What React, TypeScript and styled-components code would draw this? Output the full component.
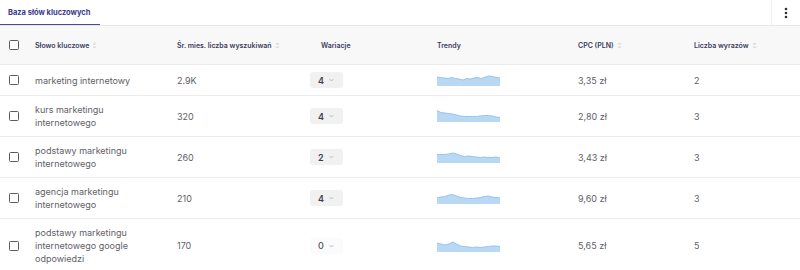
import styled, { createGlobalStyle } from "styled-components";

const GlobalStyle = createGlobalStyle`
  * {
    box-sizing: border-box;
  }

  body {
    margin: 0;
    background: #ffffff;
    font-family: "Inter", "Noto Sans", sans-serif;
  }
`;

type Keyword = {
  phrase: string;
  volume: string;
  variations: number;
  trend: number[];
  cpc: string;
  words: number;
};

const keywords: Keyword[] = [
  {
    phrase: "marketing internetowy",
    volume: "2.9K",
    variations: 4,
    trend: [3, 3.5, 4, 4.5, 3.5, 4.5, 5, 6, 4.5, 5, 4, 3.5, 4.5, 3, 2, 2.5, 3.5, 4],
    cpc: "3,35 zł",
    words: 2,
  },
  {
    phrase: "kurs marketingu internetowego",
    volume: "320",
    variations: 4,
    trend: [0.5, 2.5, 3, 3.5, 4, 5, 6, 6.5, 6.5, 6.5, 6.5, 6, 5.5, 5.5, 6, 7, 7.5],
    cpc: "2,80 zł",
    words: 3,
  },
  {
    phrase: "podstawy marketingu internetowego",
    volume: "260",
    variations: 2,
    trend: [3.5, 3.5, 3.5, 3, 2, 3, 4.5, 5.5, 5, 5.5, 6, 6.5, 6, 6.5, 6.5, 6, 7],
    cpc: "3,43 zł",
    words: 3,
  },
  {
    phrase: "agencja marketingu internetowego",
    volume: "210",
    variations: 4,
    trend: [6, 5, 4.5, 3, 2.5, 4, 5.5, 6, 6.5, 6.5, 6, 5.5, 4.5, 4, 5, 5.5, 6],
    cpc: "9,60 zł",
    words: 3,
  },
  {
    phrase: "podstawy marketingu internetowego google odpowiedzi",
    volume: "170",
    variations: 0,
    trend: [3, 4, 5, 4, 2, 4, 6, 6.5, 7, 7.5, 7, 7.5, 7, 6.5, 6, 6, 6.5],
    cpc: "5,65 zł",
    words: 5,
  },
];

const COLUMNS = "35px 142px 133px 127px 141px 116px 1fr";

function SortIcon() {
  return (
    <svg width="5" height="7" viewBox="0 0 5 7">
      <path d="M2.5 0.5 L4.5 2.5 H0.5 Z" fill="#d6d6dc" />
      <path d="M2.5 6.5 L4.5 4.5 H0.5 Z" fill="#d6d6dc" />
    </svg>
  );
}

function Sparkline({ values }: { values: number[] }) {
  const w = 63;
  const h = 12;
  const step = w / (values.length - 1);
  const line = values.map((v, i) => `${(i * step).toFixed(2)},${v}`).join(" L");
  return (
    <svg width={w} height={h} viewBox={`0 0 ${w} ${h}`}>
      <path d={`M0,${h} L${line} L${w},${h} Z`} fill="#b9d8f4" />
      <path d={`M${line}`} fill="none" stroke="#8fc0ec" strokeWidth="0.9" />
    </svg>
  );
}

function App() {
  return (
    <>
      <GlobalStyle />
      <Page>
        <TabBar>
          <Tab>Baza słów kluczowych</Tab>
          <MenuButton>
            <svg width="4" height="12" viewBox="0 0 4 12">
              <circle cx="2" cy="2" r="1.3" fill="#333" />
              <circle cx="2" cy="6" r="1.3" fill="#333" />
              <circle cx="2" cy="10" r="1.3" fill="#333" />
            </svg>
          </MenuButton>
        </TabBar>

        <HeaderRow>
          <CheckCell>
            <Checkbox />
          </CheckCell>
          <HeadCell>
            Słowo kluczowe <SortIcon />
          </HeadCell>
          <HeadCell>
            Śr. mies. liczba wyszukiwań <SortIcon />
          </HeadCell>
          <HeadCell $indent={11}>Wariacje</HeadCell>
          <HeadCell>Trendy</HeadCell>
          <HeadCell>
            CPC (PLN) <SortIcon />
          </HeadCell>
          <HeadCell>
            Liczba wyrazów <SortIcon />
          </HeadCell>
        </HeaderRow>

        {keywords.map((k) => (
          <Row key={k.phrase}>
            <CheckCell>
              <Checkbox />
            </CheckCell>
            <Cell>{k.phrase}</Cell>
            <Cell>{k.volume}</Cell>
            <Cell>
              <VariationPill $empty={k.variations === 0}>
                {k.variations}
                <svg width="5" height="4" viewBox="0 0 5 4">
                  <path d="M0.6 1 L2.5 3 L4.4 1" fill="none" stroke="#b0b0b8" strokeWidth="0.8" />
                </svg>
              </VariationPill>
            </Cell>
            <Cell>
              <Sparkline values={k.trend} />
            </Cell>
            <Cell>{k.cpc}</Cell>
            <Cell>{k.words}</Cell>
          </Row>
        ))}
      </Page>
    </>
  );
}

const Page = styled.div`
  width: 800px;
  height: 270px;
  overflow: hidden;
  background: #ffffff;
`;

const TabBar = styled.div`
  display: flex;
  height: 26px;
  border-bottom: 1px solid #e7e7ea;
`;

const Tab = styled.div`
  display: flex;
  align-items: center;
  width: 100px;
  padding: 0 8px;
  font-size: 7.5px;
  font-weight: 700;
  color: #3b3a8c;
  border-bottom: 1.5px solid #4a4998;
  white-space: nowrap;
`;

const MenuButton = styled.div`
  margin-left: auto;
  width: 29px;
  display: flex;
  align-items: center;
  justify-content: center;
  border-left: 1px solid #efeff1;
`;

const HeaderRow = styled.div`
  display: grid;
  grid-template-columns: ${COLUMNS};
  align-items: center;
  height: 39px;
  background: #f8f8f9;
  border-bottom: 1px solid #ececee;
`;

const Row = styled.div`
  display: grid;
  grid-template-columns: ${COLUMNS};
  align-items: center;
  padding: 7px 0;
  min-height: 31px;
  border-bottom: 1px solid #ececee;
`;

const CheckCell = styled.div`
  display: flex;
  padding-left: 9px;
`;

const Checkbox = styled.span`
  width: 10px;
  height: 10px;
  border: 1.3px solid #5a5a60;
  border-radius: 1.5px;
  background: #ffffff;
`;

const HeadCell = styled.div<{ $indent?: number }>`
  display: flex;
  align-items: center;
  gap: 3px;
  padding-left: ${(p) => p.$indent ?? 0}px;
  font-size: 7px;
  font-weight: 600;
  color: #3d3c60;
  white-space: nowrap;
`;

const Cell = styled.div`
  display: flex;
  align-items: center;
  padding-right: 20px;
  font-size: 9px;
  line-height: 13px;
  color: #616167;
`;

const VariationPill = styled.span<{ $empty: boolean }>`
  display: inline-flex;
  align-items: center;
  gap: 5px;
  width: 33px;
  height: 16px;
  padding-left: 8px;
  border-radius: 3px;
  background: ${(p) => (p.$empty ? "#fbfbfb" : "#f1f1f2")};
  font-size: 9px;
  font-weight: ${(p) => (p.$empty ? 500 : 600)};
  color: ${(p) => (p.$empty ? "#55555c" : "#3f3f46")};
`;

export default App;
